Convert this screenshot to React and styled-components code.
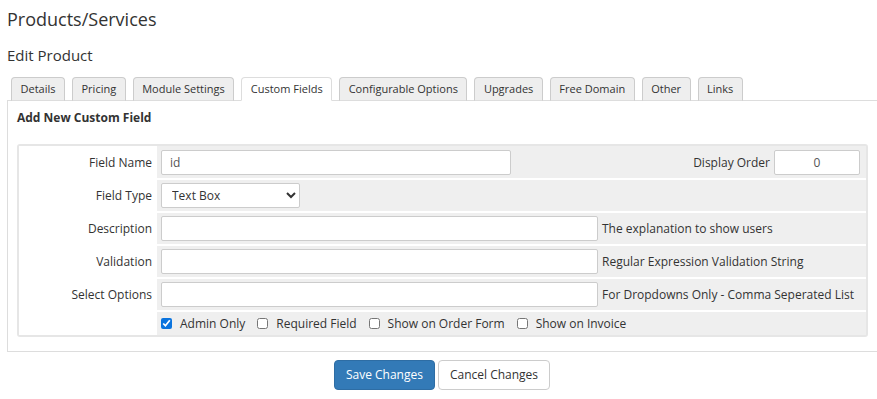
import React from "react";
import styled, { createGlobalStyle } from "styled-components";

const GlobalStyle = createGlobalStyle`
  html, body { margin: 0; padding: 0; background: #fff; overflow-x: hidden; }
  body { font-family: "Open Sans", "Liberation Sans", sans-serif; color: #333; }
  * { box-sizing: border-box; }
`;

const Page = styled.div`
  padding: 8px 0 0 7px;
  width: 877px;
`;

const Title = styled.h1`
  margin: 0;
  font-size: 18px;
  line-height: 22px;
  font-weight: 400;
  color: #333;
`;

const Subtitle = styled.h2`
  margin: 15px 0 0;
  font-size: 15px;
  line-height: 20px;
  font-weight: 400;
  color: #333;
`;

const Tabs = styled.ul`
  list-style: none;
  margin: 12px 0 0;
  padding: 0 0 0 4px;
  display: flex;
  gap: 7px;
  border-bottom: 1px solid #ddd;
`;

const Tab = styled.li`
  margin-bottom: -1px;
  padding: 0 8.5px;
  height: 24px;
  font-size: 11px;
  line-height: 22px;
  color: #333;
  background: ${(p) => (p.$active ? "#fff" : "#eee")};
  border: 1px solid ${(p) => (p.$active ? "#ddd" : "#ccc")};
  border-bottom-color: ${(p) => (p.$active ? "#fff" : "#ddd")};
  border-radius: 4px 4px 0 0;
  white-space: nowrap;
`;

const Panel = styled.div`
  border-left: 1px solid #ddd;
  border-bottom: 1px solid #ddd;
  padding: 8px 9px 14px;
`;

const SectionTitle = styled.div`
  font-size: 12px;
  line-height: 17px;
  font-weight: 700;
  color: #333;
`;

const FormBox = styled.div`
  margin-top: 18px;
  border: 2px solid #e6e6e6;
  border-radius: 3px;
  background: #fff;
`;

const Row = styled.div`
  display: flex;
  & + & { border-top: 2px solid #fff; }
`;

const Label = styled.div`
  width: 138px;
  flex: none;
  padding-right: 5px;
  display: flex;
  align-items: center;
  justify-content: flex-end;
  font-size: 12px;
  color: #333;
  background: #fff;
`;

const Field = styled.div`
  flex: 1;
  display: flex;
  align-items: center;
  gap: 4px;
  padding: ${(p) => p.$pad || "3px 6px 3px 4px"};
  background: #efefef;
  font-size: 12px;
  color: #333;
  min-height: ${(p) => p.$minHeight || "31px"};
`;

const Spacer = styled.div`
  flex: 1;
`;

const TextInput = styled.input`
  width: ${(p) => p.$width}px;
  height: 25px;
  border: 1px solid #ccc;
  border-radius: 2px;
  padding: 0 8px;
  font-family: "Open Sans", "Liberation Sans", sans-serif;
  font-size: 12px;
  color: #555;
  background: #fff;
  text-align: ${(p) => p.$align || "left"};
  outline: none;
`;

const Select = styled.select`
  width: 139px;
  height: 25px;
  border: 1px solid #ccc;
  border-radius: 2px;
  padding: 0 6px;
  font-family: "Open Sans", "Liberation Sans", sans-serif;
  font-size: 12px;
  color: #333;
  background: #fff;
`;

const CheckGroup = styled.label`
  display: flex;
  align-items: center;
  gap: 8px;
  margin-right: 8px;
  font-size: 12px;
  color: #333;
`;

const Check = styled.input`
  margin: 0;
  width: 11px;
  height: 11px;
  accent-color: #0b74de;
`;

const Actions = styled.div`
  display: flex;
  justify-content: center;
  gap: 3px;
  margin-top: 8px;
`;

const Button = styled.button`
  height: 30px;
  padding: 0 11px;
  font-family: "Open Sans", "Liberation Sans", sans-serif;
  font-size: 12px;
  line-height: 28px;
  border-radius: 4px;
  border: 1px solid ${(p) => (p.$primary ? "#2e6da4" : "#ccc")};
  background: ${(p) => (p.$primary ? "#337ab7" : "#fff")};
  color: ${(p) => (p.$primary ? "#fff" : "#333")};
`;

const tabs = [
  "Details",
  "Pricing",
  "Module Settings",
  "Custom Fields",
  "Configurable Options",
  "Upgrades",
  "Free Domain",
  "Other",
  "Links",
];

const hintRows = [
  ["Description", "The explanation to show users"],
  ["Validation", "Regular Expression Validation String"],
  ["Select Options", "For Dropdowns Only - Comma Seperated List"],
];

const checks = [
  ["Admin Only", true],
  ["Required Field", false],
  ["Show on Order Form", false],
  ["Show on Invoice", false],
];

export default function App() {
  return (
    <>
      <GlobalStyle />
      <Page>
        <Title>Products/Services</Title>
        <Subtitle>Edit Product</Subtitle>
        <Tabs>
          {tabs.map((t) => (
            <Tab key={t} $active={t === "Custom Fields"}>
              {t}
            </Tab>
          ))}
        </Tabs>
        <Panel>
          <SectionTitle>Add New Custom Field</SectionTitle>
          <FormBox>
            <Row>
              <Label>Field Name</Label>
              <Field $pad="4px 6px 3px 4px">
                <TextInput $width={350} defaultValue="id" />
                <Spacer />
                <span>Display Order</span>
                <TextInput $width={86} $align="center" defaultValue="0" />
              </Field>
            </Row>
            <Row>
              <Label>Field Type</Label>
              <Field>
                <Select defaultValue="Text Box">
                  <option>Text Box</option>
                  <option>Link/URL</option>
                  <option>Password</option>
                  <option>Drop Down</option>
                  <option>Tick Box</option>
                  <option>Text Area</option>
                </Select>
              </Field>
            </Row>
            {hintRows.map(([label, hint]) => (
              <Row key={label}>
                <Label>{label}</Label>
                <Field $pad="3px 6px 2.5px 4px">
                  <TextInput $width={437} />
                  <span>{hint}</span>
                </Field>
              </Row>
            ))}
            <Row>
              <Label />
              <Field $minHeight="23px">
                {checks.map(([label, on]) => (
                  <CheckGroup key={label}>
                    <Check type="checkbox" defaultChecked={on} />
                    {label}
                  </CheckGroup>
                ))}
              </Field>
            </Row>
          </FormBox>
        </Panel>
        <Actions>
          <Button $primary>Save Changes</Button>
          <Button>Cancel Changes</Button>
        </Actions>
      </Page>
    </>
  );
}
